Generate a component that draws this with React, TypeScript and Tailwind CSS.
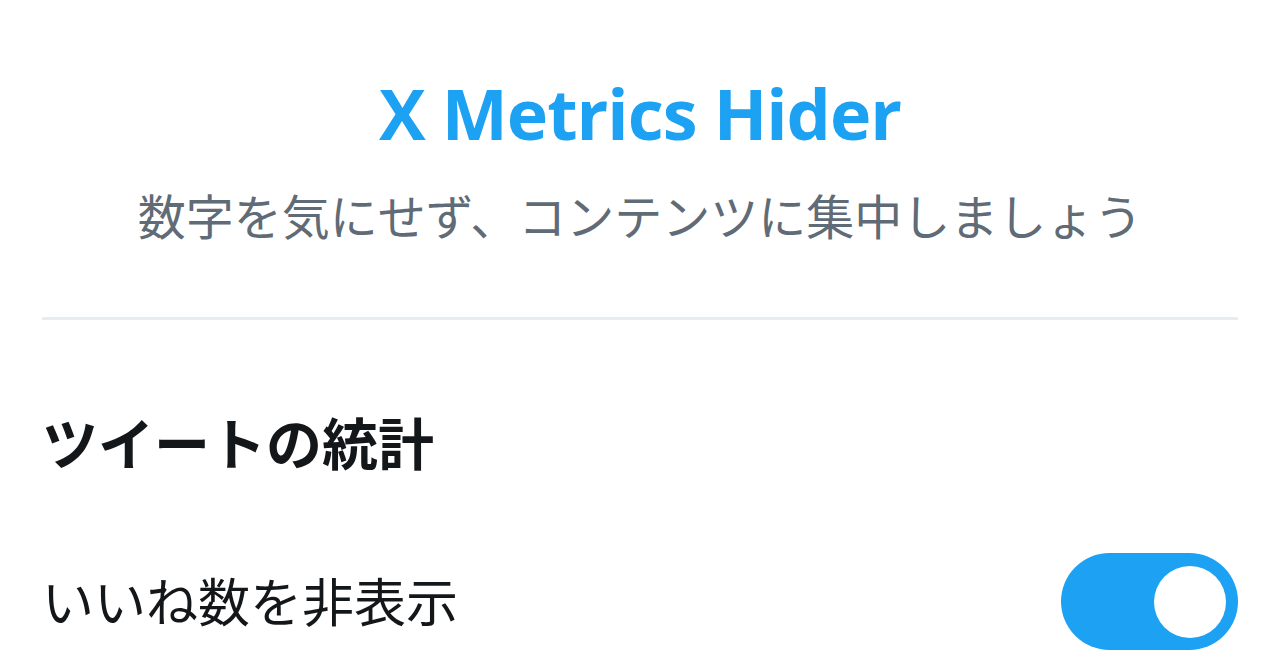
export default function App() {
  const font = { fontFamily: '"Open Sans", "Noto Sans CJK JP", sans-serif' };
  return (
    <div className="min-h-screen bg-white px-[42px] pt-[73px]" style={font}>
      <header className="text-center">
        <h1 className="text-[70px] font-bold leading-[80px] text-[#1da1f2] tracking-[-1px]">
          X Metrics Hider
        </h1>
        <p className="mt-[32px] text-[48px] leading-[64px] text-[#5f6b76]">
          数字を気にせず、コンテンツに集中しましょう
        </p>
      </header>

      <div className="mt-[68px] h-[3px] bg-[#e6ecf0]" />

      <section className="mt-[88px]">
        <h2 className="text-[56px] font-bold leading-[70px] text-[#14171a]">
          ツイートの統計
        </h2>
        <div className="mt-[75px] flex items-center justify-between">
          <span className="text-[52px] leading-[64px] text-[#14171a]">
            いいね数を非表示
          </span>
          <button
            type="button"
            className="flex h-[97px] w-[177px] items-center justify-end rounded-full bg-[#1da1f2] pr-[12px]"
          >
            <span className="h-[72px] w-[72px] rounded-full bg-white" />
          </button>
        </div>
      </section>
    </div>
  );
}
